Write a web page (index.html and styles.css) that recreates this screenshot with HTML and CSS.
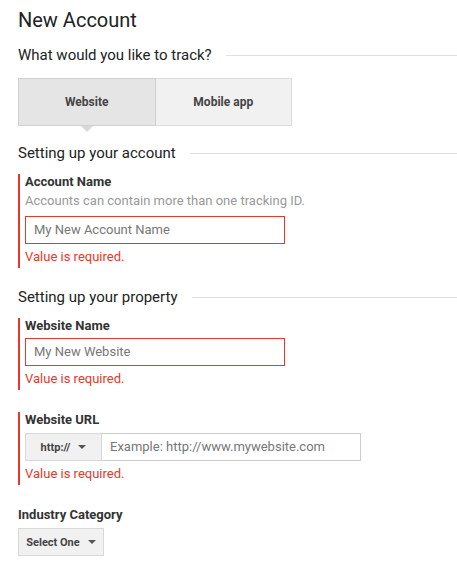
FILE: index.html
```html
<!DOCTYPE html>
<html>
<head>
<meta charset="utf-8">
<link rel="stylesheet" href="styles.css">
</head>
<body>
<div class="page">
  <h1 class="title">New Account</h1>

  <div class="section-head s1"><span>What would you like to track?</span><div class="rule"></div></div>
  <div class="toggle">
    <div class="tbtn active">Website</div>
    <div class="tbtn">Mobile app</div>
  </div>

  <div class="section-head s2"><span>Setting up your account</span><div class="rule"></div></div>
  <div class="field error">
    <div class="label">Account Name</div>
    <div class="help">Accounts can contain more than one tracking ID.</div>
    <div class="input bad">My New Account Name</div>
    <div class="err">Value is required.</div>
  </div>

  <div class="section-head s3"><span>Setting up your property</span><div class="rule"></div></div>
  <div class="field error">
    <div class="label">Website Name</div>
    <div class="input bad">My New Website</div>
    <div class="err">Value is required.</div>
  </div>

  <div class="field error f3">
    <div class="label">Website URL</div>
    <div class="group">
      <div class="drop">http://<span class="caret"></span></div>
      <div class="input url">Example: http://www.mywebsite.com</div>
    </div>
    <div class="err">Value is required.</div>
  </div>

  <div class="field f4">
    <div class="label">Industry Category</div>
    <div class="drop select">Select One<span class="caret"></span></div>
  </div>
</div>
</body>
</html>
```

FILE: styles.css
```css
html, body { margin: 0; padding: 0; background: #fff; }
body { font-family: Roboto, "Noto Sans", Arial, sans-serif; color: #222; }
.page { padding: 7px 0 0 18px; }
.title { font-size: 20px; font-weight: 400; margin: 0; line-height: 26px; color: #222; }
.section-head { display: flex; align-items: center; font-size: 15px; line-height: 18px; color: #222; }
.section-head .rule { flex: 1; height: 1px; background: #e0e0e0; margin-left: 14px; }
.s1 { margin-top: 13px; }
.toggle { display: flex; margin-top: 14px; width: 274px; }
.tbtn { position: relative; flex: 1; height: 46px; display: flex; align-items: center; justify-content: center; font-size: 12px; font-weight: 700; color: #444; background: #f1f1f1; border: 1px solid #dcdcdc; }
.tbtn + .tbtn { border-left: none; }
.tbtn.active { background: #e5e5e5; border-color: #d0d0d0; }
.tbtn.active::after { content: ""; position: absolute; left: 50%; bottom: -7px; margin-left: -6px; border-left: 6px solid transparent; border-right: 6px solid transparent; border-top: 6px solid #d8d8d8; }
.s2 { margin-top: 18px; }
.s3 { margin-top: 20px; }
.field { margin-top: 12px; padding-left: 7px; padding-bottom: 3px; }
.field.error { border-left: 2px solid #e8372b; padding-left: 5px; }
.label { font-size: 13px; font-weight: 700; color: #333; line-height: 16px; }
.help { font-size: 13px; color: #999; line-height: 17px; margin-top: 2px; margin-bottom: 7px; }
.input { box-sizing: border-box; height: 28px; width: 260px; border: 1px solid #ccc; font-size: 13px; color: #777; line-height: 26px; padding-left: 8px; margin-top: 4px; }
.input.bad { border-color: #e8372b; }
.err { font-size: 13px; color: #e8372b; line-height: 17px; margin-top: 4px; }
.group { display: flex; margin-top: 5px; }
.drop { box-sizing: border-box; height: 28px; display: flex; align-items: center; justify-content: center; font-size: 11px; font-weight: 700; color: #444; background: #f1f1f1; border: 1px solid #d8d8d8; }
.group .drop { width: 77px; }
.caret { display: inline-block; margin-left: 8px; border-left: 4px solid transparent; border-right: 4px solid transparent; border-top: 4px solid #555; }
.input.url { width: 259px; margin-top: 0; border-left: none; }
.f3 { margin-top: 22px; }
.f4 { margin-top: 22px; padding-left: 0; padding-bottom: 0; }
.select { width: 86px; margin-top: 5px; }
```
